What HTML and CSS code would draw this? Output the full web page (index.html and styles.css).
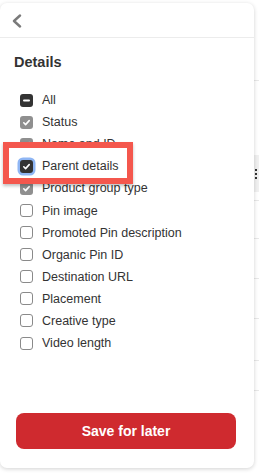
FILE: index.html
```html
<!DOCTYPE html>
<html>
<head>
<meta charset="utf-8">
<link rel="stylesheet" href="styles.css">
</head>
<body>
<div class="page">
  <div class="panel">
    <div class="header">
      <svg class="back" width="12" height="14" viewBox="0 0 12 14"><polyline points="9,1.5 3,7 9,12.5" fill="none" stroke="#7a7a7a" stroke-width="2.4" stroke-linecap="round" stroke-linejoin="round"/></svg>
    </div>
    <div class="title">Details</div>
    <ul class="list">
      <li class="row"><span class="box box-dark"><svg width="13" height="13" viewBox="0 0 13 13"><line x1="4" y1="6.5" x2="9" y2="6.5" stroke="#fff" stroke-width="2" stroke-linecap="round"/></svg></span><span class="label">All</span></li>
      <li class="row"><span class="box box-grey"><svg width="13" height="13" viewBox="0 0 13 13"><polyline points="3.8,6.8 5.6,8.6 9.2,4.6" fill="none" stroke="#fff" stroke-width="1.6" stroke-linecap="round" stroke-linejoin="round"/></svg></span><span class="label">Status</span></li>
      <li class="row"><span class="box box-grey"><svg width="13" height="13" viewBox="0 0 13 13"><polyline points="3.8,6.8 5.6,8.6 9.2,4.6" fill="none" stroke="#fff" stroke-width="1.6" stroke-linecap="round" stroke-linejoin="round"/></svg></span><span class="label">Name and ID</span></li>
      <li class="row row-focus"><span class="box box-dark box-ring"><svg width="13" height="13" viewBox="0 0 13 13"><polyline points="3.8,6.8 5.6,8.6 9.2,4.6" fill="none" stroke="#fff" stroke-width="1.6" stroke-linecap="round" stroke-linejoin="round"/></svg></span><span class="label">Parent details</span></li>
      <li class="row"><span class="box box-grey"><svg width="13" height="13" viewBox="0 0 13 13"><polyline points="3.8,6.8 5.6,8.6 9.2,4.6" fill="none" stroke="#fff" stroke-width="1.6" stroke-linecap="round" stroke-linejoin="round"/></svg></span><span class="label">Product group type</span></li>
      <li class="row"><span class="box box-empty"></span><span class="label">Pin image</span></li>
      <li class="row"><span class="box box-empty"></span><span class="label">Promoted Pin description</span></li>
      <li class="row"><span class="box box-empty"></span><span class="label">Organic Pin ID</span></li>
      <li class="row"><span class="box box-empty"></span><span class="label">Destination URL</span></li>
      <li class="row"><span class="box box-empty"></span><span class="label">Placement</span></li>
      <li class="row"><span class="box box-empty"></span><span class="label">Creative type</span></li>
      <li class="row"><span class="box box-empty"></span><span class="label">Video length</span></li>
    </ul>
    <button class="save">Save for later</button>
  </div>
  <div class="strip">
    <div class="seg s1"></div>
    <div class="seg s2"></div>
    <div class="seg grey"><span class="dots"><i></i><i></i><i></i></span></div>
    <div class="seg s3"></div>
    <div class="seg s4"></div>
    <div class="seg s5"></div>
    <div class="seg s6"></div>
    <div class="seg s7"></div>
    <div class="seg s8"></div>
  </div>
</div>
</body>
</html>
```
FILE: styles.css
```css
html, body {
  margin: 0;
  padding: 0;
  background: #fff;
}
body {
  font-family: "Liberation Sans", Arial, sans-serif;
  color: #333;
  width: 259px;
  height: 473px;
  overflow: hidden;
}
.page {
  display: flex;
  align-items: flex-start;
}
.panel {
  width: 254px;
  height: 465px;
  margin-top: 3px;
  box-sizing: border-box;
  background: #fff;
  border-radius: 7px;
  box-shadow: 0 1px 4px rgba(0, 0, 0, 0.18);
  display: flex;
  flex-direction: column;
  padding-bottom: 19px;
  position: relative;
  z-index: 2;
}
.header {
  height: 34px;
  border-bottom: 1px solid #ececec;
  display: flex;
  align-items: center;
  padding-left: 11px;
}
.back {
  display: block;
  margin-top: 1px;
}
.title {
  font-weight: bold;
  font-size: 14.5px;
  line-height: 17px;
  padding: 16px 0 0 14px;
  color: #333;
}
.list {
  list-style: none;
  margin: 18px 0 0 0;
  padding: 0;
}
.row {
  height: 22.1px;
  display: flex;
  align-items: center;
  padding-left: 20px;
  gap: 9px;
  font-size: 12.5px;
  color: #333;
}
.box {
  width: 13px;
  height: 13px;
  box-sizing: border-box;
  border-radius: 3px;
  flex: none;
  display: flex;
}
.box svg {
  display: block;
}
.box-dark {
  background: #333;
}
.box-grey {
  background: #8f8f8f;
}
.box-empty {
  border: 1px solid #8a8a8a;
  background: #fff;
}
.box-ring {
  box-shadow: 0 0 0 2.5px #8fb6f4;
}
.row-focus {
  position: relative;
  z-index: 1;
}
.row-focus::before {
  content: "";
  position: absolute;
  left: 3px;
  top: -13px;
  width: 130px;
  height: 42px;
  box-sizing: border-box;
  border: 6px solid #f4574d;
  background: #fff;
  box-shadow: 0 2px 3px rgba(0, 0, 0, 0.25);
  z-index: -1;
}
.save {
  margin: auto 18px 0 16px;
  height: 36px;
  border: none;
  border-radius: 8px;
  background: #cf2a2f;
  color: #fff;
  font-family: "Liberation Sans", Arial, sans-serif;
  font-weight: bold;
  font-size: 14px;
  padding: 0;
}
.strip {
  flex: 1;
  display: flex;
  flex-direction: column;
}
.seg {
  box-sizing: border-box;
  border-bottom: 1px solid #e8e8e8;
}
.s1 { height: 81px; }
.s2 { height: 74px; border-bottom: none; }
.grey {
  height: 37px;
  background: #f0f0f0;
  border-bottom: none;
  display: flex;
  align-items: center;
}
.dots {
  display: flex;
  flex-direction: column;
  gap: 2px;
  margin-left: 1px;
}
.dots i {
  display: block;
  width: 2px;
  height: 2px;
  background: #333;
}
.s3 { height: 9px; }
.s4 { height: 38px; }
.s5 { height: 40px; }
.s6 { height: 40px; }
.s7 { height: 42px; }
.s8 { height: 30px; }
```
